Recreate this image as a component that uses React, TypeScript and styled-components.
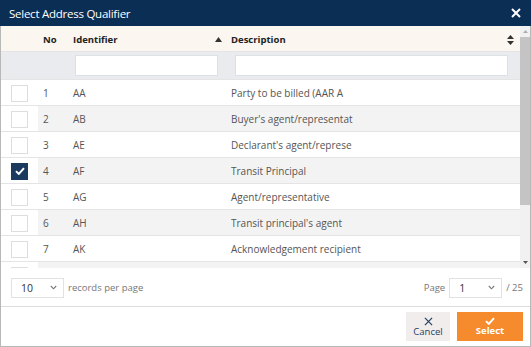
import React from "react";
import styled, { createGlobalStyle } from "styled-components";

const GlobalStyle = createGlobalStyle`
  html, body {
    margin: 0;
    padding: 0;
    background: #ffffff;
  }
  body {
    font-family: "Open Sans", "Liberation Sans", sans-serif;
  }
`;

const rows = [
  { no: 1, id: "AA", desc: "Party to be billed (AAR A", checked: false },
  { no: 2, id: "AB", desc: "Buyer's agent/representat", checked: false },
  { no: 3, id: "AE", desc: "Declarant's agent/represe", checked: false },
  { no: 4, id: "AF", desc: "Transit Principal", checked: true },
  { no: 5, id: "AG", desc: "Agent/representative", checked: false },
  { no: 6, id: "AH", desc: "Transit principal's agent", checked: false },
  { no: 7, id: "AK", desc: "Acknowledgement recipient", checked: false },
];

const Dialog = styled.div`
  width: 531px;
  height: 347px;
  display: flex;
  flex-direction: column;
  box-sizing: border-box;
`;

const TitleBar = styled.div`
  height: 26px;
  background: #0b2e55;
  color: #ffffff;
  display: flex;
  align-items: center;
  justify-content: space-between;
  padding: 0 10px 0 9px;
  font-size: 11.5px;
  letter-spacing: -0.25px;
`;

const CloseButton = styled.span`
  display: flex;
  align-items: center;
`;

const Body = styled.div`
  flex: 1;
  display: flex;
  flex-direction: column;
  border: 1px solid #b8b8b8;
  border-top: none;
`;

const GridWrap = styled.div`
  display: flex;
  height: 242px;
`;

const Table = styled.div`
  flex: 1;
  display: flex;
  flex-direction: column;
  overflow: hidden;
`;

const Row = styled.div<{ $bg: string; $h: number }>`
  display: grid;
  grid-template-columns: 37px 30px 160px 1fr;
  align-items: center;
  height: ${(p) => p.$h}px;
  flex-shrink: 0;
  background: ${(p) => p.$bg};
  border-bottom: 1px solid #e4e4e4;
  box-sizing: border-box;
  font-size: 10px;
  color: #555555;
`;

const HeadCell = styled.div<{ $pl: number }>`
  display: flex;
  align-items: center;
  justify-content: space-between;
  padding-left: ${(p) => p.$pl}px;
  padding-right: 6px;
  padding-top: 2px;
  font-size: 9.5px;
  font-weight: 700;
  color: #222222;
`;

const Cell = styled.div<{ $pl: number; $white?: boolean }>`
  height: 100%;
  display: flex;
  align-items: center;
  padding-left: ${(p) => p.$pl}px;
  padding-top: 1px;
  box-sizing: border-box;
  background: ${(p) => (p.$white ? "#ffffff" : "transparent")};
  white-space: nowrap;
  overflow: hidden;
`;

const FilterCell = styled.div<{ $pl: number; $pr: number }>`
  padding: 0 ${(p) => p.$pr}px 0 ${(p) => p.$pl}px;
`;

const FilterInput = styled.div`
  height: 19px;
  background: #ffffff;
  border: 1px solid #dde0e4;
`;

const Box = styled.div<{ $checked?: boolean }>`
  width: 17px;
  height: 17px;
  margin-left: 10px;
  box-sizing: border-box;
  border: 1px solid ${(p) => (p.$checked ? "#1c3a5e" : "#dedede")};
  background: ${(p) => (p.$checked ? "#1c3a5e" : "#ffffff")};
  display: flex;
  align-items: center;
  justify-content: center;
`;

const ScrollBar = styled.div`
  width: 10px;
  display: flex;
  flex-direction: column;
  background: #f1f1f1;
`;

const ScrollArrow = styled.div`
  height: 11px;
  display: flex;
  align-items: center;
  justify-content: center;
`;

const Thumb = styled.div`
  height: 168px;
  background: #c4c4c4;
`;

const Spacer = styled.div`
  flex: 1;
`;

const Pager = styled.div`
  height: 37px;
  display: flex;
  align-items: center;
  justify-content: space-between;
  padding: 1px 7px 0 10px;
  border-bottom: 1px solid #dcdcdc;
  font-size: 9.5px;
  color: #777777;
`;

const PagerGroup = styled.div`
  display: flex;
  align-items: center;
  gap: 4px;
`;

const SelectBox = styled.div`
  width: 53px;
  height: 20px;
  box-sizing: border-box;
  border: 1px solid #e2e2e2;
  display: flex;
  align-items: center;
  justify-content: space-between;
  padding: 0 6px 0 9px;
  color: #333333;
  font-size: 10.5px;
`;

const Actions = styled.div`
  flex: 1;
  display: flex;
  justify-content: flex-end;
  align-items: center;
  gap: 7px;
  padding-right: 7px;
`;

const ActionButton = styled.button<{ $primary?: boolean }>`
  height: 29px;
  width: ${(p) => (p.$primary ? 66 : 44)}px;
  border: none;
  padding: 0;
  display: flex;
  flex-direction: column;
  align-items: center;
  justify-content: center;
  font-family: "Open Sans", "Liberation Sans", sans-serif;
  font-size: 9.5px;
  line-height: 11px;
  font-weight: ${(p) => (p.$primary ? 700 : 400)};
  background: ${(p) => (p.$primary ? "#f58b2c" : "#f1eded")};
  color: ${(p) => (p.$primary ? "#ffffff" : "#1f3d63")};
`;

const Chevron = () => (
  <svg width="7" height="5" viewBox="0 0 7 5">
    <path d="M0.8 1 L3.5 3.8 L6.2 1" fill="none" stroke="#777" strokeWidth="1.1" />
  </svg>
);

const Check = ({ color, w }: { color: string; w: number }) => (
  <svg width={w} height={w * 0.8} viewBox="0 0 10 8">
    <path d="M1 4.2 L3.8 7 L9 1.2" fill="none" stroke={color} strokeWidth="1.9" />
  </svg>
);

const Cross = ({ color, size, sw }: { color: string; size: number; sw: number }) => (
  <svg width={size} height={size} viewBox="0 0 10 10">
    <path d="M1 1 L9 9 M9 1 L1 9" stroke={color} strokeWidth={sw} />
  </svg>
);

export default function App() {
  return (
    <>
      <GlobalStyle />
      <Dialog>
        <TitleBar>
          <span>Select Address Qualifier</span>
          <CloseButton>
            <Cross color="#ffffff" size={10} sw={2} />
          </CloseButton>
        </TitleBar>
        <Body>
          <GridWrap>
            <Table>
              <Row $bg="#fbf6f0" $h={26}>
                <div />
                <HeadCell $pl={5}>No</HeadCell>
                <HeadCell $pl={5}>
                  Identifier
                  <svg width="7" height="5" viewBox="0 0 7 5">
                    <path d="M0 5 L3.5 0 L7 5 Z" fill="#333" />
                  </svg>
                </HeadCell>
                <HeadCell $pl={3}>
                  Description
                  <svg width="7" height="10" viewBox="0 0 7 10">
                    <path d="M0 4 L3.5 0 L7 4 Z M0 6 L3.5 10 L7 6 Z" fill="#333" />
                  </svg>
                </HeadCell>
              </Row>
              <Row $bg="#e9ebee" $h={28}>
                <div />
                <div />
                <FilterCell $pl={7} $pr={10}>
                  <FilterInput />
                </FilterCell>
                <FilterCell $pl={7} $pr={12}>
                  <FilterInput />
                </FilterCell>
              </Row>
              {rows.map((r) => (
                <Row key={r.no} $bg={r.no % 2 === 0 ? "#f3f3f3" : "#ffffff"} $h={26}>
                  <Cell $pl={0} $white>
                    <Box $checked={r.checked}>
                      {r.checked && <Check color="#ffffff" w={10} />}
                    </Box>
                  </Cell>
                  <Cell $pl={5}>{r.no}</Cell>
                  <Cell $pl={5}>{r.id}</Cell>
                  <Cell $pl={3}>{r.desc}</Cell>
                </Row>
              ))}
              <Row $bg="#f3f3f3" $h={26}>
                <Cell $pl={0} $white>
                  <Box />
                </Cell>
              </Row>
            </Table>
            <ScrollBar>
              <ScrollArrow>
                <svg width="5" height="3" viewBox="0 0 5 3">
                  <path d="M0 3 L2.5 0 L5 3 Z" fill="#b0b0b0" />
                </svg>
              </ScrollArrow>
              <Thumb />
              <Spacer />
              <ScrollArrow>
                <svg width="5" height="3" viewBox="0 0 5 3">
                  <path d="M0 0 L2.5 3 L5 0 Z" fill="#555" />
                </svg>
              </ScrollArrow>
            </ScrollBar>
          </GridWrap>
          <Pager>
            <PagerGroup>
              <SelectBox>
                10 <Chevron />
              </SelectBox>
              records per page
            </PagerGroup>
            <PagerGroup>
              Page
              <SelectBox>
                1 <Chevron />
              </SelectBox>
              / 25
            </PagerGroup>
          </Pager>
          <Actions>
            <ActionButton>
              <Cross color="#1f3d63" size={9} sw={1.3} />
              Cancel
            </ActionButton>
            <ActionButton $primary>
              <Check color="#ffffff" w={10} />
              Select
            </ActionButton>
          </Actions>
        </Body>
      </Dialog>
    </>
  );
}
